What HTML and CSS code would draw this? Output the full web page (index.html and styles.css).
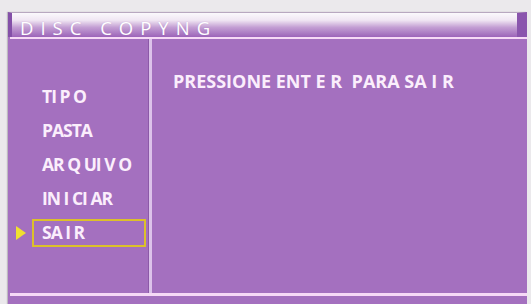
FILE: index.html
```html
<!DOCTYPE html>
<html>
<head>
<meta charset="utf-8">
<link rel="stylesheet" href="styles.css">
</head>
<body>
<div class="panel">
  <div class="header">
    <span class="title">DISC COPYNG</span>
  </div>
  <div class="rule"></div>
  <div class="content">
    <div class="menu">
      <div class="item">TI P O</div>
      <div class="item">PASTA</div>
      <div class="item">AR Q UI V O</div>
      <div class="item">IN I CI AR</div>
      <div class="item selected"><span class="arrow"></span>SA I R</div>
    </div>
    <div class="divider"></div>
    <div class="main">
      <div class="message">PRESSIONE ENT E R&nbsp; PARA SA I R</div>
    </div>
  </div>
  <div class="rule bottom"></div>
  <div class="foot"></div>
</div>
</body>
</html>
```
FILE: styles.css
```css
html, body {
  margin: 0;
  padding: 0;
  background: #ebe9ec;
  width: 531px;
  height: 304px;
  overflow: hidden;
}
.panel {
  margin: 12px 4px 0 8px;
  width: 519px;
  height: 292px;
  display: flex;
  flex-direction: column;
  background: #a470bf;
  box-shadow: -1px 0 1px rgba(120,110,130,0.4);
}
.header {
  height: 25px;
  flex: none;
  background: linear-gradient(to bottom, #fbf9fc 0%, #f0e6f3 30%, #c39ed3 60%, #9c64b9 100%);
  border-left: 4px solid #8450a8;
  border-right: 10px solid #8a55ad;
  border-top: 1px solid #b8a8c0;
  box-sizing: border-box;
  display: flex;
  align-items: flex-end;
  padding-left: 8px;
}
.title {
  font-family: "Open Sans", "DejaVu Sans", sans-serif;
  font-weight: 400;
  font-size: 18.5px;
  letter-spacing: 7px;
  color: #ffffff;
  line-height: 18px;
  text-shadow: 0 0 1px rgba(160,110,190,0.5);
}
.rule {
  height: 2px;
  flex: none;
  margin-left: 2px;
  background: #f6d9f6;
}
.content {
  flex: 1;
  display: flex;
}
.menu {
  width: 140px;
  flex: none;
  padding-top: 46px;
  box-sizing: border-box;
}
.item {
  position: relative;
  font-family: "Open Sans", "DejaVu Sans", sans-serif;
  font-weight: 700;
  font-size: 17.5px;
  letter-spacing: -1px;
  color: #fbeefc;
  height: 34px;
  line-height: 22px;
  padding-left: 34px;
}
.item.selected {
  margin-left: 24px;
  width: 114px;
  height: 28px;
  box-sizing: border-box;
  border: 2px solid #dcc02a;
  padding-left: 8px;
  margin-top: -2px;
  line-height: 22px;
}
.arrow {
  position: absolute;
  left: -18px;
  top: 5px;
  width: 0;
  height: 0;
  border-top: 7px solid transparent;
  border-bottom: 7px solid transparent;
  border-left: 10px solid #f0e030;
}
.divider {
  width: 3px;
  flex: none;
  background: #dcc2ea;
  border-left: 1px solid #8c5aa8;
}
.main {
  flex: 1;
  padding: 31px 0 0 21px;
}
.message {
  font-family: "Open Sans", "DejaVu Sans", sans-serif;
  font-weight: 700;
  font-size: 18px;
  letter-spacing: 0;
  word-spacing: 0;
  color: #fbeefc;
  line-height: 22px;
}
.rule.bottom {
  height: 3px;
}
.foot {
  height: 8px;
  flex: none;
}
```
